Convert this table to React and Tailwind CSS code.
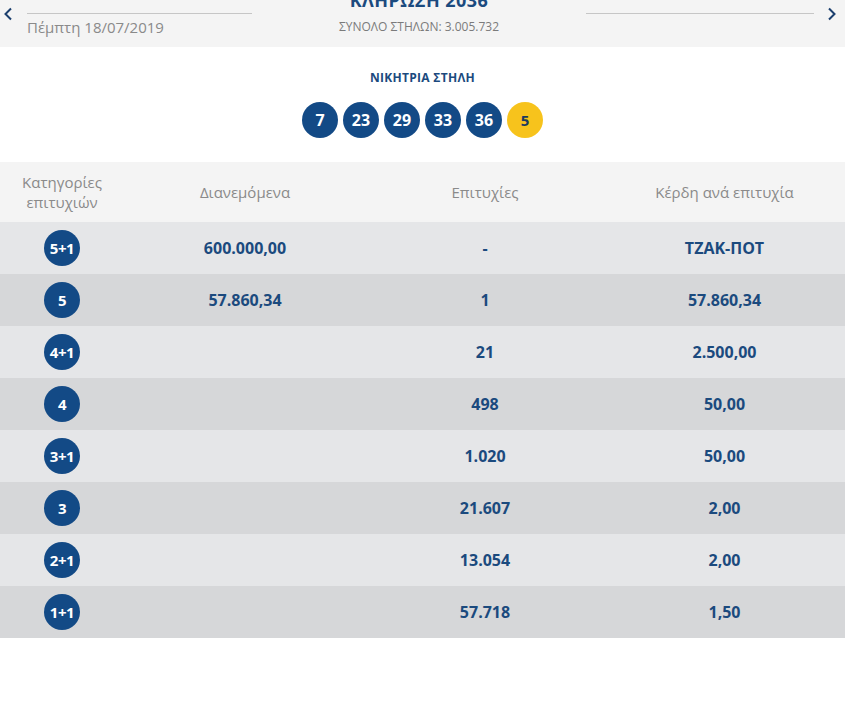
import React from "react";

const balls = [7, 23, 29, 33, 36];

const rows = [
  { cat: "5+1", dist: "600.000,00", wins: "-", prize: "ΤΖΑΚ-ΠΟΤ" },
  { cat: "5", dist: "57.860,34", wins: "1", prize: "57.860,34" },
  { cat: "4+1", dist: "", wins: "21", prize: "2.500,00" },
  { cat: "4", dist: "", wins: "498", prize: "50,00" },
  { cat: "3+1", dist: "", wins: "1.020", prize: "50,00" },
  { cat: "3", dist: "", wins: "21.607", prize: "2,00" },
  { cat: "2+1", dist: "", wins: "13.054", prize: "2,00" },
  { cat: "1+1", dist: "", wins: "57.718", prize: "1,50" },
];

function Chevron({ dir }) {
  return (
    <svg width="10" height="14" viewBox="0 0 10 14" fill="none">
      <path
        d={dir === "left" ? "M8 1.5 2.5 7 8 12.5" : "M2 1.5 7.5 7 2 12.5"}
        stroke="#1b3f6e"
        strokeWidth="2"
      />
    </svg>
  );
}

export default function App() {
  return (
    <div className="w-[845px] bg-white font-['Open_Sans',sans-serif]">
      {/* header */}
      <div className="h-[47px] bg-[#f4f4f4] flex">
        <div className="w-[252px] flex items-start">
          <div className="w-[27px] pt-[7px] pl-[3px]">
            <Chevron dir="left" />
          </div>
          <div className="flex-1 pt-[13px]">
            <div className="h-px bg-[#c6c6c6]"></div>
            <div className="text-[15px] text-[#8a8a8a] mt-[3px] leading-5">
              Πέμπτη 18/07/2019
            </div>
          </div>
        </div>
        <div className="flex-1 flex flex-col items-center">
          <div className="text-[18px] font-bold text-[#1b4a7e] leading-5 -mt-[10px] tracking-wide">
            ΚΛΗΡΩΣΗ 2036
          </div>
          <div className="text-[12px] text-[#7b7b7b] mt-[9px] leading-4">
            ΣΥΝΟΛΟ ΣΤΗΛΩΝ: 3.005.732
          </div>
        </div>
        <div className="w-[259px] flex items-start">
          <div className="flex-1 pt-[13px]">
            <div className="h-px bg-[#c6c6c6]"></div>
          </div>
          <div className="w-[31px] pt-[7px] pl-[13px]">
            <Chevron dir="right" />
          </div>
        </div>
      </div>

      {/* winning column */}
      <div className="h-[115px] flex flex-col items-center">
        <div className="mt-[23px] text-[12px] font-bold text-[#1b4a7e] tracking-wide leading-4">
          ΝΙΚΗΤΡΙΑ ΣΤΗΛΗ
        </div>
        <div className="mt-[16px] flex gap-[5px]">
          {balls.map((b) => (
            <div
              key={b}
              className="w-9 h-9 rounded-full bg-[#134a86] text-white text-[16px] font-bold flex items-center justify-center"
            >
              {b}
            </div>
          ))}
          <div className="w-9 h-9 rounded-full bg-[#f7c31c] text-[#1b3a5e] text-[15px] font-bold flex items-center justify-center">
            5
          </div>
        </div>
      </div>

      {/* table */}
      <div className="grid grid-cols-[124px_242px_238px_1fr] h-[60px] bg-[#f4f4f4] items-center text-[#8a8a8a] text-[15px] text-center">
        <div className="leading-5">
          Κατηγορίες
          <br />
          επιτυχιών
        </div>
        <div>Διανεμόμενα</div>
        <div>Επιτυχίες</div>
        <div>Κέρδη ανά επιτυχία</div>
      </div>
      {rows.map((r, i) => (
        <div
          key={r.cat}
          className={
            "grid grid-cols-[124px_242px_238px_1fr] h-[52px] items-center text-center text-[16px] font-bold text-[#1b4a7e] " +
            (i % 2 === 0 ? "bg-[#e5e6e8]" : "bg-[#d6d7d9]")
          }
        >
          <div className="flex justify-center">
            <div className="w-9 h-9 rounded-full bg-[#134a86] text-white text-[15px] font-bold flex items-center justify-center tracking-tight">
              {r.cat}
            </div>
          </div>
          <div>{r.dist}</div>
          <div>{r.wins}</div>
          <div>{r.prize}</div>
        </div>
      ))}
    </div>
  );
}
